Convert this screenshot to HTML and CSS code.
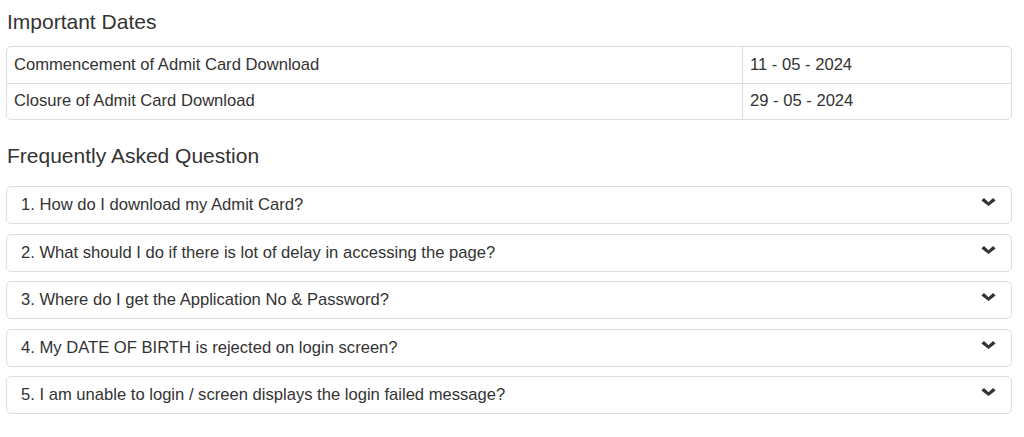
FILE: index.html
```html
<!DOCTYPE html>
<html lang="en">
<head>
<meta charset="utf-8">
<title>Important Dates</title>
<link rel="stylesheet" href="styles.css">
</head>
<body>
<div class="page">
  <h4 class="section-title first">Important Dates</h4>
  <table class="dates">
    <colgroup><col class="col-event"><col></colgroup>
    <tbody>
      <tr><td>Commencement of Admit Card Download</td><td>11 - 05 - 2024</td></tr>
      <tr><td>Closure of Admit Card Download</td><td>29 - 05 - 2024</td></tr>
    </tbody>
  </table>

  <h4 class="section-title">Frequently Asked Question</h4>
  <div class="faq">
    <div class="faq-item"><span class="q">1. How do I download my Admit Card?</span><svg class="chev" viewBox="0 0 16 9"><path d="M0 2.9 L2.9 0 L8 4.9 L13.1 0 L16 2.9 L8 9 Z"/></svg></div>
    <div class="faq-item"><span class="q">2. What should I do if there is lot of delay in accessing the page?</span><svg class="chev" viewBox="0 0 16 9"><path d="M0 2.9 L2.9 0 L8 4.9 L13.1 0 L16 2.9 L8 9 Z"/></svg></div>
    <div class="faq-item"><span class="q">3. Where do I get the Application No &amp; Password?</span><svg class="chev" viewBox="0 0 16 9"><path d="M0 2.9 L2.9 0 L8 4.9 L13.1 0 L16 2.9 L8 9 Z"/></svg></div>
    <div class="faq-item"><span class="q">4. My DATE OF BIRTH is rejected on login screen?</span><svg class="chev" viewBox="0 0 16 9"><path d="M0 2.9 L2.9 0 L8 4.9 L13.1 0 L16 2.9 L8 9 Z"/></svg></div>
    <div class="faq-item"><span class="q">5. I am unable to login / screen displays the login failed message?</span><svg class="chev" viewBox="0 0 16 9"><path d="M0 2.9 L2.9 0 L8 4.9 L13.1 0 L16 2.9 L8 9 Z"/></svg></div>
  </div>
</div>
</body>
</html>
```

FILE: styles.css
```css
* { box-sizing: border-box; }
html, body { margin: 0; padding: 0; background: #fff; }
body {
  font-family: "Liberation Sans", Arial, Helvetica, sans-serif;
  color: #333;
  font-size: 16.6px;
}
.page {
  padding: 0 12px 0 6px;
}
.section-title {
  font-size: 21px;
  line-height: 23px;
  font-weight: normal;
  margin: 0 0 19px 1px;
  color: #333;
}
.section-title.first {
  padding-top: 10px;
  margin-bottom: 13px;
}
.dates {
  width: 100%;
  border: 1px solid #ddd;
  border-radius: 5px;
  border-collapse: separate;
  border-spacing: 0;
  margin-bottom: 24px;
  table-layout: fixed;
}
.col-event { width: 735px; }
.dates td {
  padding: 8px 7px;
  line-height: 20px;
  vertical-align: middle;
}
.dates td + td { border-left: 1px solid #ddd; }
.dates tr + tr td {
  border-top: 1px solid #ddd;
  padding-top: 7px;
}
.faq {
  display: flex;
  flex-direction: column;
  gap: 9.5px;
}
.faq-item {
  display: flex;
  justify-content: space-between;
  align-items: flex-start;
  border: 1px solid #ddd;
  border-radius: 5px;
  padding: 8px 15px 8px 14px;
  line-height: 20px;
}
.chev {
  width: 15px;
  height: 8px;
  margin-top: 3px;
  fill: #333;
  flex: none;
}
```
